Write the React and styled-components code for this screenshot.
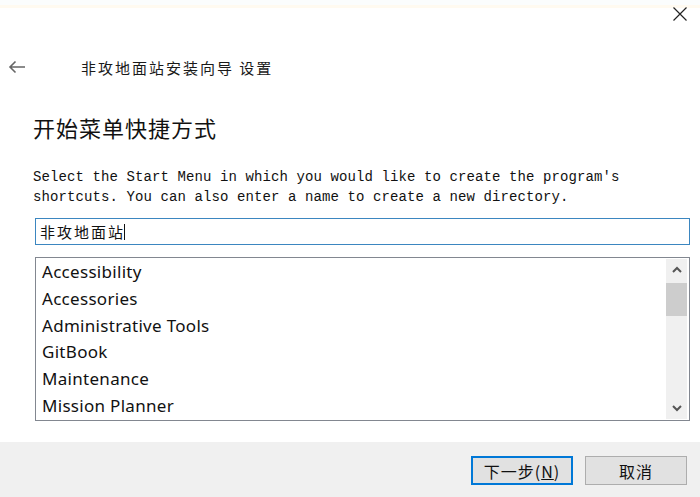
import React from "react"
import styled, { createGlobalStyle } from "styled-components"

const GlobalStyle = createGlobalStyle`
  html, body {
    margin: 0;
    padding: 0;
    background: #ffffff;
  }
`

const CJK = `"Noto Sans CJK SC", "Noto Sans", sans-serif`

const WindowStyl = styled.div`
  width: 700px;
  height: 497px;
  display: flex;
  flex-direction: column;
  background: #ffffff;
  overflow: hidden;
`

const TitleBarStyl = styled.div`
  height: 26px;
  display: flex;
  justify-content: flex-end;
  align-items: center;
  border-top: 5px solid #fbfdfd;
  box-shadow: inset 0 4px 0 -1px #fffaf0;
  box-sizing: border-box;
  padding-right: 8px;
`

const CloseBtn = styled.div`
  width: 24px;
  height: 20px;
  display: flex;
  align-items: center;
  justify-content: center;
  margin-top: -4px;
`

const HeaderStyl = styled.div`
  display: flex;
  align-items: center;
  height: 30px;
  margin-top: 26px;
  padding-left: 7px;
`

const BackBtn = styled.div`
  width: 20px;
  height: 18px;
  display: flex;
  align-items: center;
  justify-content: center;
  margin-right: 54px;
`

const HeaderTitle = styled.div`
  font-family: ${CJK};
  font-size: 15px;
  letter-spacing: 2px;
  color: #1a1a1a;
`

const ContentStyl = styled.div`
  flex: 1;
  padding: 0 10px 0 33px;
  display: flex;
  flex-direction: column;
`

const PageHeading = styled.h1`
  margin: 30px 0 0 0;
  font-family: ${CJK};
  font-weight: normal;
  font-size: 22px;
  letter-spacing: 1px;
  line-height: 30px;
  color: #111;
`

const Description = styled.p`
  margin: 25px 0 0 0;
  font-family: "Liberation Mono", monospace;
  font-size: 14px;
  letter-spacing: 0.1px;
  line-height: 20px;
  color: #111;
  white-space: pre;
`

const NameInput = styled.div`
  margin: 11px 0 0 2px;
  height: 27px;
  box-sizing: border-box;
  border: 1px solid #3b86c0;
  display: flex;
  align-items: center;
  padding-left: 4px;
  font-family: ${CJK};
  font-size: 15px;
  letter-spacing: 2px;
  color: #111;
`

const Caret = styled.span`
  display: inline-block;
  width: 1px;
  height: 16px;
  background: #111;
  margin-left: -1px;
`

const ListBox = styled.div`
  margin: 12px 0 0 2px;
  height: 164px;
  box-sizing: border-box;
  border: 1px solid #828790;
  display: flex;
`

const ListItems = styled.div`
  flex: 1;
  padding: 1px 0 0 6px;
`

const ListItem = styled.div`
  height: 26.8px;
  line-height: 26px;
  font-family: "Noto Sans", sans-serif;
  font-size: 17px;
  letter-spacing: 0.3px;
  color: #111;
`

const ScrollBar = styled.div`
  width: 21px;
  margin: 1px 2px 1px 0;
  background: #f0f0f0;
  display: flex;
  flex-direction: column;
`

const ScrollArrow = styled.div`
  height: 21px;
  display: flex;
  align-items: center;
  justify-content: center;
`

const ScrollThumb = styled.div`
  height: 33px;
  margin: 3px 0 0 0;
  background: #cdcdcd;
`

const ScrollTrack = styled.div`
  flex: 1;
`

const FooterStyl = styled.div`
  height: 55px;
  background: #f0f0f0;
  display: flex;
  justify-content: flex-end;
  align-items: center;
  gap: 12px;
  padding: 2px 13px 0 0;
  box-sizing: border-box;
`

const Button = styled.button`
  width: 102px;
  height: 29px;
  box-sizing: border-box;
  background: #e1e1e1;
  border: ${p => p.primary ? "2px solid #0078d7" : "1px solid #adadad"};
  font-family: ${CJK};
  font-size: 16px;
  letter-spacing: 1px;
  color: #111;
  padding: 0;
  u {
    text-decoration: underline;
  }
`

const items = [
  "Accessibility",
  "Accessories",
  "Administrative Tools",
  "GitBook",
  "Maintenance",
  "Mission Planner",
]

const App = () =>
  <WindowStyl>
    <GlobalStyle />
    <TitleBarStyl>
      <CloseBtn>
        <svg width="16" height="16" viewBox="0 0 16 16">
          <path d="M1.5 1.5 L14.5 14.5 M14.5 1.5 L1.5 14.5" stroke="#222" strokeWidth="1.2" />
        </svg>
      </CloseBtn>
    </TitleBarStyl>

    <HeaderStyl>
      <BackBtn>
        <svg width="18" height="14" viewBox="0 0 18 14">
          <path d="M17 7 H2 M7.5 1.5 L2 7 L7.5 12.5" stroke="#666" strokeWidth="1.6" fill="none" />
        </svg>
      </BackBtn>
      <HeaderTitle>非攻地面站安装向导 设置</HeaderTitle>
    </HeaderStyl>

    <ContentStyl>
      <PageHeading>开始菜单快捷方式</PageHeading>
      <Description>
        {"Select the Start Menu in which you would like to create the program's\nshortcuts. You can also enter a name to create a new directory."}
      </Description>
      <NameInput>非攻地面站<Caret /></NameInput>
      <ListBox>
        <ListItems>
          {items.map(it => <ListItem key={it}>{it}</ListItem>)}
        </ListItems>
        <ScrollBar>
          <ScrollArrow>
            <svg width="10" height="7" viewBox="0 0 10 7">
              <path d="M1 6 L5 2 L9 6" stroke="#555" strokeWidth="2" fill="none" />
            </svg>
          </ScrollArrow>
          <ScrollThumb />
          <ScrollTrack />
          <ScrollArrow>
            <svg width="10" height="7" viewBox="0 0 10 7">
              <path d="M1 1 L5 5 L9 1" stroke="#555" strokeWidth="2" fill="none" />
            </svg>
          </ScrollArrow>
        </ScrollBar>
      </ListBox>
    </ContentStyl>

    <FooterStyl>
      <Button primary>下一步(<u>N</u>)</Button>
      <Button>取消</Button>
    </FooterStyl>
  </WindowStyl>

export default App
